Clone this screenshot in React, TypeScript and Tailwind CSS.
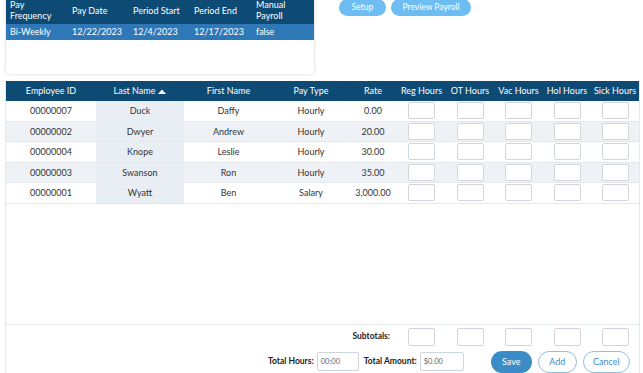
import React from 'react';

const cols = 'grid grid-cols-[90px_88px_89px_76px_48px_49px_48px_49px_48px_48px]';

const employees = [
  { id: '00000007', last: 'Duck', first: 'Daffy', type: 'Hourly', rate: '0.00' },
  { id: '00000002', last: 'Dwyer', first: 'Andrew', type: 'Hourly', rate: '20.00' },
  { id: '00000004', last: 'Knope', first: 'Leslie', type: 'Hourly', rate: '30.00' },
  { id: '00000003', last: 'Swanson', first: 'Ron', type: 'Hourly', rate: '35.00' },
  { id: '00000001', last: 'Wyatt', first: 'Ben', type: 'Salary', rate: '3,000.00' },
];

function HourBox() {
  return <div className="h-[17px] w-[27px] rounded-[2px] border border-[#cfd6dc] bg-white" />;
}

export default function App() {
  return (
    <div className="relative h-[373px] w-[643px] overflow-hidden bg-white text-[9px] text-[#333] [font-family:Lato,'Open_Sans',sans-serif]">
      {/* top: pay period + actions */}
      <div className="flex h-[81px] items-start">
        <div className="ml-[6px] mt-[-5px] h-[79px] w-[308px] bg-white shadow-[0_0_3px_rgba(0,0,0,0.18)]">
          <div className="grid h-[29px] grid-cols-[62px_61px_61px_62px_62px] items-center bg-[#0d4a74] pt-[1px] text-white leading-[11px]">
            <div className="pl-[4px]">Pay<br />Frequency</div>
            <div className="pl-[4px]">Pay Date</div>
            <div className="pl-[4px]">Period Start</div>
            <div className="pl-[4px]">Period End</div>
            <div className="pl-[4px]">Manual<br />Payroll</div>
          </div>
          <div className="grid h-[16px] grid-cols-[62px_61px_61px_62px_62px] items-center bg-[#2f78b8] text-white">
            <div className="pl-[4px]">Bi-Weekly</div>
            <div className="pl-[4px]">12/22/2023</div>
            <div className="pl-[4px]">12/4/2023</div>
            <div className="pl-[4px]">12/17/2023</div>
            <div className="pl-[4px]">false</div>
          </div>
        </div>
        <div className="ml-[25px] mt-[-1px] flex gap-[5px]">
          <button className="h-[17px] w-[47px] rounded-full bg-[#6dbdf3] text-[8.5px] text-white">Setup</button>
          <button className="h-[17px] w-[80px] rounded-full bg-[#6dbdf3] text-[8.5px] text-white">Preview Payroll</button>
        </div>
      </div>

      {/* employee grid */}
      <div className="ml-[5px] flex h-[292px] w-[635px] flex-col border-x border-[#e6e9ec]">
        <div className={`${cols} h-[20px] items-center bg-[#0d4a74] text-center text-white`}>
          <div>Employee ID</div>
          <div className="flex items-center justify-center gap-[3px]">
            Last Name
            <svg width="8" height="5" viewBox="0 0 8 5"><path d="M0 5 L4 0.5 L8 5 Z" fill="white" /></svg>
          </div>
          <div>First Name</div>
          <div>Pay Type</div>
          <div>Rate</div>
          <div className="whitespace-nowrap">Reg Hours</div>
          <div className="whitespace-nowrap">OT Hours</div>
          <div className="whitespace-nowrap">Vac Hours</div>
          <div className="whitespace-nowrap">Hol Hours</div>
          <div className="whitespace-nowrap">Sick Hours</div>
        </div>
        {employees.map((e, i) => (
          <div
            key={e.id}
            className={`${cols} h-[20.5px] items-center border-b border-[#e4e8ec] text-center ${i % 2 === 1 ? 'bg-[#eef2f6]' : 'bg-white'}`}
          >
            <div>{e.id}</div>
            <div className="flex h-full items-center justify-center bg-[#e8eef3]">{e.last}</div>
            <div>{e.first}</div>
            <div>{e.type}</div>
            <div>{e.rate}</div>
            {[0, 1, 2, 3, 4].map((k) => (
              <div key={k} className="flex justify-center">
                <HourBox />
              </div>
            ))}
          </div>
        ))}
        <div className="flex-1" />
        <div className="border-t border-[#e6e9ec]">
          <div className={`${cols} mt-[2px] h-[19px] items-center`}>
            <div className="col-span-5 pr-[7px] text-right text-[8.5px] font-bold text-[#222]">Subtotals:</div>
            {[0, 1, 2, 3, 4].map((k) => (
              <div key={k} className="flex justify-center">
                <div className="h-[18px] w-[27px] rounded-[2px] border border-[#cfd6dc]" />
              </div>
            ))}
          </div>
          <div className="mt-[4px] flex h-[23px] items-center whitespace-nowrap">
            <div className="ml-[262px] text-[8.5px] font-bold text-[#222]">Total Hours:</div>
            <div className="ml-[3px] flex h-[19px] w-[42px] items-center rounded-[2px] border border-[#cfd6dc] pl-[3px] text-[7.5px] text-[#666]">00:00</div>
            <div className="ml-[5px] text-[8.5px] font-bold text-[#222]">Total Amount:</div>
            <div className="ml-[3px] flex h-[19px] w-[44px] items-center rounded-[2px] border border-[#cfd6dc] pl-[3px] text-[7.5px] text-[#666]">$0.00</div>
            <button className="ml-[27px] h-[22px] w-[41px] rounded-full bg-[#3a8dc6] text-white">Save</button>
            <button className="ml-[6px] h-[22px] w-[39px] rounded-full border border-[#8fc0e3] text-[#3a8dc6]">Add</button>
            <button className="ml-[6px] h-[22px] w-[47px] rounded-full border border-[#8fc0e3] text-[#3a8dc6]">Cancel</button>
          </div>
        </div>
      </div>
    </div>
  );
}
